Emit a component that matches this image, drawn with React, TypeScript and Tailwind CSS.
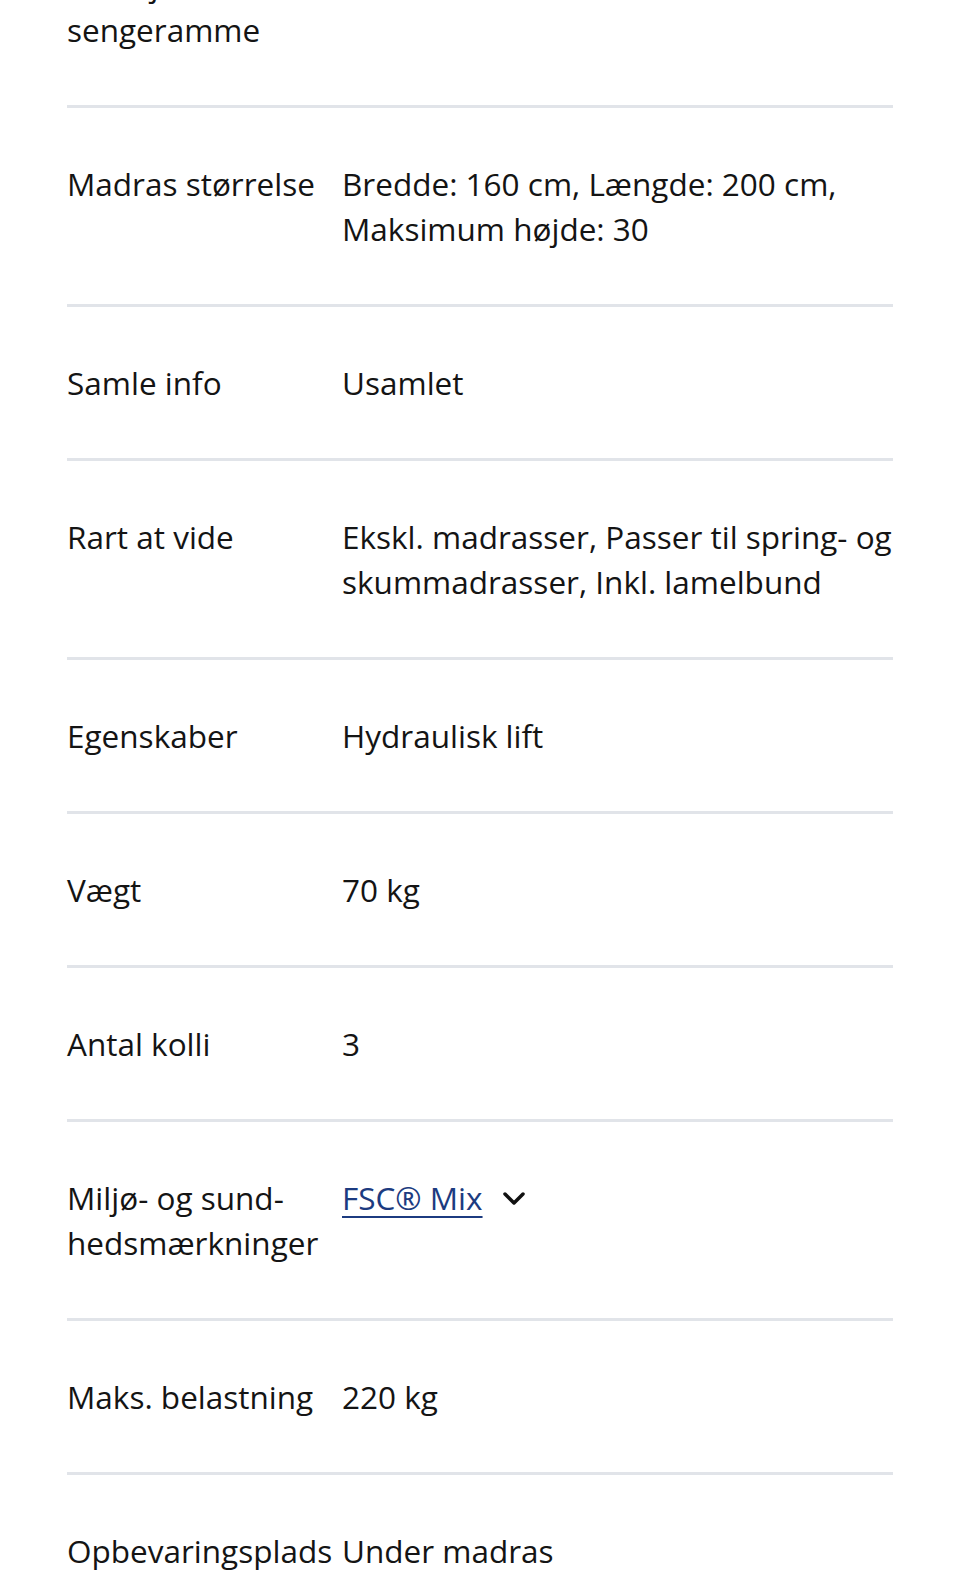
interface SpecRow {
  label: string
  value: string
  link?: boolean
}

const ROWS: SpecRow[] = [
  { label: 'Fri højde under sengeramme', value: '30 cm' },
  { label: 'Madras størrelse', value: 'Bredde: 160 cm, Længde: 200 cm, Maksimum højde: 30' },
  { label: 'Samle info', value: 'Usamlet' },
  { label: 'Rart at vide', value: 'Ekskl. madrasser, Passer til spring- og skummadrasser, Inkl. lamelbund' },
  { label: 'Egenskaber', value: 'Hydraulisk lift' },
  { label: 'Vægt', value: '70 kg' },
  { label: 'Antal kolli', value: '3' },
  { label: 'Miljø- og sund\u00ADhedsmærkninger', value: 'FSC® Mix', link: true },
  { label: 'Maks. belastning', value: '220 kg' },
  { label: 'Opbevaringsplads', value: 'Under madras' },
]

export default function App() {
  return (
    <div className="min-h-screen overflow-hidden bg-white font-['Open_Sans',sans-serif] text-[31.5px] leading-[45px] text-[#141414]">
      <div className="mx-[67px] -mt-[91px]">
        {ROWS.map((row, idx) => (
          <div
            key={row.label}
            className={`grid grid-cols-[275px_1fr] py-[53px] ${
              idx !== ROWS.length - 1 ? 'border-b-[3px] border-[#e1e4e9]' : ''
            }`}
          >
            <div className="pr-1">{row.label}</div>
            <div>
              {row.link ? (
                <span className="flex items-center gap-[19px]">
                  <a href="#" className="text-[#1c3b80] underline decoration-2 underline-offset-[6px]">
                    {row.value}
                  </a>
                  {/* expand toggle */}
                  <svg width="24" height="15" viewBox="0 0 24 15" fill="none" className="mt-[2px]">
                    <polyline
                      points="3,3 12,12 21,3"
                      stroke="#111"
                      strokeWidth="3.5"
                      strokeLinecap="round"
                      strokeLinejoin="round"
                    />
                  </svg>
                </span>
              ) : (
                row.value
              )}
            </div>
          </div>
        ))}
      </div>
    </div>
  )
}
